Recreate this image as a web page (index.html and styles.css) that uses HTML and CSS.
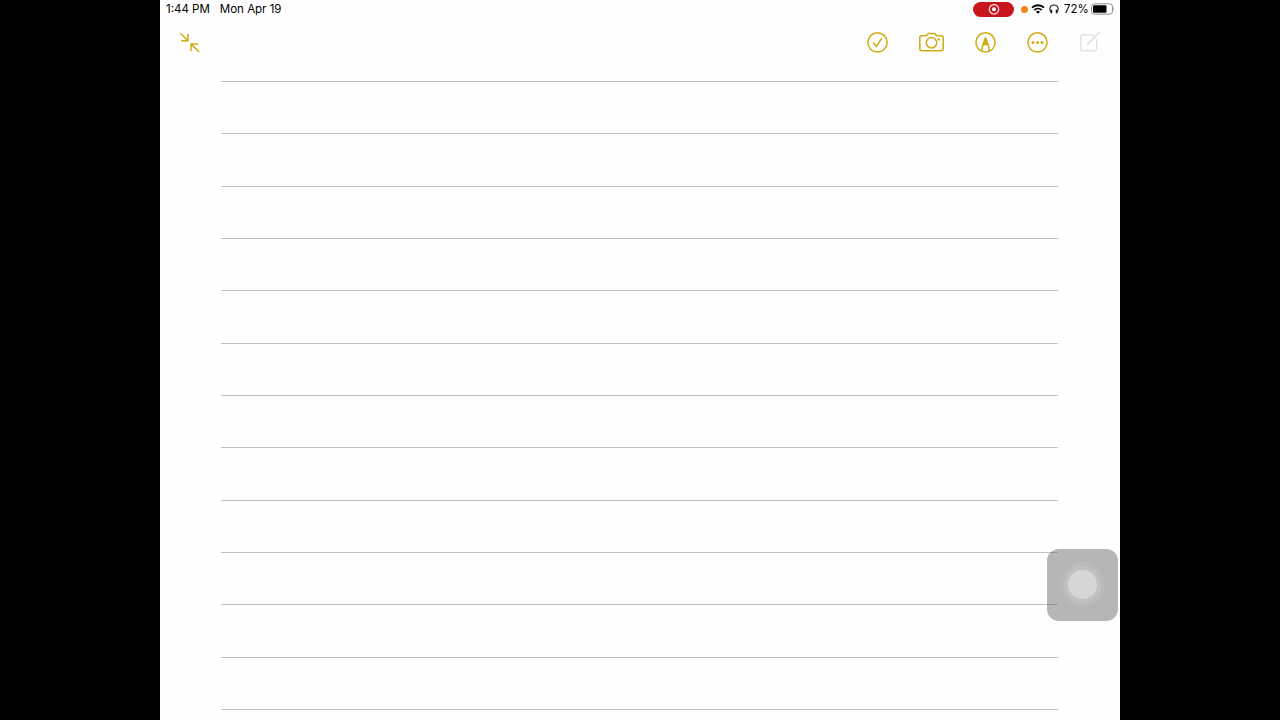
FILE: index.html
```
<!DOCTYPE html>
<html lang="en">
<head>
    <meta charset="UTF-8">
    <meta name="viewport" content="width=device-width, initial-scale=1.0">
    <title>Notes</title>
    <link rel="stylesheet" href="styles.css">
</head>
<body>
    <div class="tablet">
        <header class="status-bar">
            <div class="status-left">
                <span class="time">1:44 PM</span>
                <span class="date">Mon Apr 19</span>
            </div>
            <div class="status-right">
                <div class="recording">
                    <svg width="12" height="12" viewBox="0 0 12 12">
                        <circle cx="6" cy="6.300" r="4.7" fill="none" stroke="#fff" stroke-width="1.1"/>
                        <circle cx="6" cy="6.300" r="2" fill="#fff"/>
                    </svg>
                </div>
                <span class="mic-dot"></span>
                <svg class="wifi" width="14" height="10" viewBox="0 0 14 10" fill="none" stroke="#000" stroke-width="1.8">
                    <path d="M1 3.7a8.6 8.6 0 0 1 12 0"/>
                    <path d="M3.3 6.1a5.3 5.3 0 0 1 7.4 0"/>
                    <path d="M7 9.7 5 7.7a2.9 2.9 0 0 1 4 0z" fill="#000" stroke="none"/>
                </svg>
                <svg class="headphones" width="10" height="10" viewBox="0 0 10 10">
                    <path d="M2.4 8.4C-.3 6.200.6 1 5 1s5.300 5.200 2.600 7.400" fill="none" stroke="#222" stroke-width="1.1"/>
                    <rect x="1.600" y="5.500" width="1.600" height="3.900" rx=".7" fill="#222"/>
                    <rect x="6.800" y="5.500" width="1.600" height="3.900" rx=".7" fill="#222"/>
                </svg>
                <span class="percent">72%</span>
                <svg class="battery" width="24" height="12" viewBox="0 0 24 12">
                    <rect x=".5" y=".8" width="21" height="10.400" rx="3" fill="none" stroke="#8c8c8c"/>
                    <rect x="2" y="2.300" width="13.500" height="7.400" rx="1.200" fill="#000"/>
                    <path d="M22.700 4.300q1.300 1.700 0 3.400z" fill="#777"/>
                </svg>
            </div>
        </header>

        <nav class="toolbar">
            <svg class="collapse" width="22" height="22" viewBox="0 -.5 22 22">
                <path d="M1.500 2 9 9.300M9 2.900v6.400H2.600M19.700 20l-7.700-7.400M12 19v-6.400h6.500"/>
            </svg>
            <div class="tools">
                <svg width="22" height="22" viewBox=".5 -.4 22 22">
                    <circle cx="11" cy="11" r="9.600"/>
                    <path d="m7 11.700 2.900 3.500 5.100-8"/>
                </svg>
                <svg width="26" height="22" viewBox=".5 -.4 26 22">
                    <path d="M3.300 4.300h3.900c.8 0 1-.4 1.500-1.100C9.200 2.400 9.500 2 10.300 2h5.400c.8 0 1.100.4 1.600 1.200.5.700.7 1.100 1.500 1.100h3.900c1.300 0 2 .7 2 2v11c0 1.300-.7 2-2 2H3.300c-1.300 0-2-.7-2-2v-11c0-1.300.7-2 2-2z"/>
                    <circle cx="13" cy="11.300" r="5.200"/>
                    <circle class="solid" cx="20.300" cy="8" r="1.200"/>
                </svg>
                <svg width="22" height="22" viewBox=".5 -.4 22 22">
                    <circle cx="11" cy="11" r="9.600"/>
                    <path d="M7.200 19.300 8 14.500 11 6.500l3 8 .8 4.800M8.200 13h5.600"/>
                    <path class="solid" d="M11 4.800 13.800 12.500H8.200z"/>
                </svg>
                <svg width="22" height="22" viewBox=".5 -.4 22 22">
                    <circle cx="11" cy="11" r="9.600"/>
                    <circle class="solid" cx="6.500" cy="11" r="1.500"/>
                    <circle class="solid" cx="11" cy="11" r="1.500"/>
                    <circle class="solid" cx="15.500" cy="11" r="1.500"/>
                </svg>
                <svg class="disabled" width="22" height="22" viewBox=".3 -.2 22 22">
                    <path d="M14.500 3.500H4.200c-1.400 0-2.200.8-2.200 2.200v11.600c0 1.400.8 2.200 2.200 2.200h11.600c1.400 0 2.200-.8 2.200-2.200V8"/>
                    <path d="m9 12.800 9.200-9.100M19.300 2.500l1-1" stroke-width="2"/>
                </svg>
            </div>
        </nav>

        <main class="paper">
            <div class="line"></div>
            <div class="line"></div>
            <div class="line"></div>
            <div class="line"></div>
            <div class="line"></div>
            <div class="line"></div>
            <div class="line"></div>
            <div class="line"></div>
            <div class="line"></div>
            <div class="line"></div>
            <div class="line"></div>
            <div class="line"></div>
            <div class="line"></div>
        </main>

        <!-- floating touch button -->
        <div class="assistive">
            <div class="ring-outer">
                <div class="ring-inner">
                    <div class="knob"></div>
                </div>
            </div>
        </div>
    </div>
</body>
</html>
```
FILE: styles.css
```
body {
    margin: 0;
    height: 720px;
    background-color: #000;
    font-family: Inter, "Liberation Sans", sans-serif;
    display: flex;
    justify-content: center;
    overflow: hidden;
}

.tablet {
    position: relative;
    width: 960px;
    height: 720px;
    background-color: #fefefe;
    overflow: hidden;
}

.status-bar {
    height: 18px;
    padding: 0 5px 0 6px;
    display: flex;
    align-items: center;
    justify-content: space-between;
    font-size: 11.5px;
    color: #000;
    white-space: nowrap;
}

.status-left,
.status-right {
    display: flex;
    align-items: center;
}

.status-left {
    gap: 10px;
}

.recording {
    width: 41px;
    height: 15px;
    border-radius: 8px;
    background-color: #c9151e;
    display: flex;
    align-items: center;
    justify-content: center;
}

.mic-dot {
    width: 7px;
    height: 7px;
    margin-left: 7px;
    border-radius: 50%;
    background-color: #ee8a12;
}

.wifi {
    margin-left: 3px;
}

.headphones {
    margin-left: 4px;
}

.percent {
    width: 24px;
    margin-left: 5px;
}

.battery {
    margin-left: 3px;
}

.toolbar {
    height: 48px;
    padding: 0 19px;
    display: flex;
    align-items: center;
    justify-content: space-between;
}

.toolbar svg {
    display: block;
    fill: none;
    stroke: #cfaa12;
    stroke-width: 1.5;
    stroke-linecap: round;
    stroke-linejoin: round;
}

.toolbar .solid {
    fill: #cfaa12;
    stroke: none;
}

.toolbar .disabled {
    stroke: #e4e4e4;
}

.tools {
    display: flex;
    align-items: center;
    gap: 30px;
}

.paper {
    width: 837px;
    margin-left: 61.4px;
    padding-top: 15px;
}

.line {
    height: 52.35px;
    box-sizing: border-box;
    border-top: 1px solid #bfbfbf;
}

.assistive {
    position: absolute;
    left: 887px;
    top: 549px;
    width: 71px;
    height: 71.5px;
    border-radius: 12px;
    background-color: rgba(110, 110, 110, 0.5);
    display: flex;
    align-items: center;
    justify-content: center;
}

.ring-outer,
.ring-inner,
.knob {
    border-radius: 50%;
    display: flex;
    align-items: center;
    justify-content: center;
}

.ring-outer {
    width: 45px;
    height: 45px;
    background-color: #bababa;
}

.ring-inner {
    width: 37px;
    height: 37px;
    background-color: #c1c1c1;
}

.knob {
    width: 29px;
    height: 29px;
    background-color: #d6d6d6;
}
```
